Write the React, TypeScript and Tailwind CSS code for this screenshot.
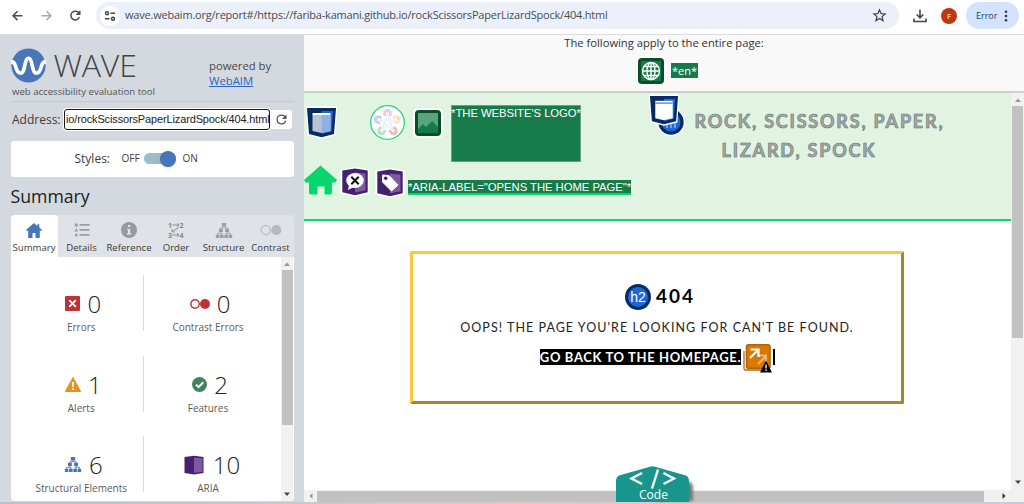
import type { ReactNode } from 'react';

const sans = "font-['Open_Sans','Noto_Sans',sans-serif]";
const arial = "font-['Liberation_Sans',Arial,sans-serif]";

function ReloadIcon({ className }: { className: string }) {
  return (
    <svg viewBox="0 0 24 24" className={className} fill="currentColor">
      <path d="M17.65 6.35A7.96 7.96 0 0 0 12 4a8 8 0 1 0 7.73 10h-2.08A6 6 0 1 1 12 6c1.66 0 3.14.69 4.22 1.78L13 11h7V4z" />
    </svg>
  );
}

function BrowserBar() {
  return (
    <header className="flex h-[35px] shrink-0 items-start border-b border-[#dcdddd] bg-white text-[#474747]">
      <svg viewBox="0 0 96 32" className="h-8 w-24 shrink-0" fill="none" strokeWidth="1.5">
        <path d="M22.500 15.700H13.300M17.500 11.300l-4.400 4.400 4.400 4.400" stroke="#4b4b4b" />
        <path d="M41.500 15.700h9.200M46.500 11.300l4.400 4.400-4.400 4.400" stroke="#a9a9a9" />
        <path d="M79.200 13.600a4.400 4.400 0 1 0 .2 3.500M79.800 10.800v3.400h-3.500" stroke="#4b4b4b" />
      </svg>
      <div className="mt-[2px] flex h-[27px] w-[803px] shrink-0 items-center rounded-full bg-[#ebf0fa]">
        <span className="ml-1 flex size-5 items-center justify-center rounded-full bg-white">
          <svg viewBox="0 0 12 12" className="size-3" fill="none" stroke="#444" strokeWidth="1.4">
            <circle cx="3" cy="3.200" r="1.500" />
            <path d="M6.500 3.200H11M1 8.800h4.500" />
            <circle cx="9" cy="8.800" r="1.500" />
          </svg>
        </span>
        <span className={`${sans} ml-[5px] text-[11px] tracking-[-.21px] text-[#4a4c50] whitespace-nowrap`}>
          wave.webaim.org/report#/https://fariba-kamani.github.io/rockScissorsPaperLizardSpock/404.html
        </span>
        <svg viewBox="0 0 24 24" className="mr-[12px] ml-auto size-[15px]" fill="none" stroke="#444" strokeWidth="2">
          <path d="m12 3 2.600 6 6.400.6-4.900 4.200 1.500 6.400-5.600-3.400-5.600 3.400 1.500-6.400L3 9.600 9.400 9z" />
        </svg>
      </div>
      <svg viewBox="0 0 14 14" className="mt-[9px] ml-[14px] size-[14px] shrink-0" fill="none" stroke="#474747" strokeWidth="1.600">
        <path d="M7 .5v8M3.700 5.500 7 8.800l3.300-3.300M1 9.500v3h12v-3" />
      </svg>
      <span className={`${sans} mt-2 ml-[14px] flex size-4 shrink-0 items-center justify-center rounded-full bg-[#c1360f] text-[8px] text-white`}>F</span>
      <span className="mt-[2px] ml-[9px] flex h-[27px] w-[53px] shrink-0 items-center rounded-full bg-[#d3e3fd] pl-[10px]">
        <span className={`${sans} w-[26px] text-[9px] text-[#24405f]`}>Error</span>
        <svg viewBox="0 0 4 12" className="ml-[2px] h-3 w-1" fill="#1f3b5b">
          <circle cx="2" cy="1.700" r="1.300" />
          <circle cx="2" cy="6" r="1.300" />
          <circle cx="2" cy="10.300" r="1.300" />
        </svg>
      </span>
    </header>
  );
}

function TreeIcon({ color, className }: { color: string; className: string }) {
  return (
    <svg viewBox="0 0 18 16" className={className} fill={color}>
      <path d="M6.700 0h4.600v3.600H6.700zM3.600 6.200h4.200v3.400H3.600zM10.200 6.200h4.200v3.400h-4.200zM.3 12.400h3.800V16H.3zM4.800 12.400h3.800V16H4.800zM9.400 12.400h3.800V16H9.400zM13.900 12.400h3.800V16h-3.800z" />
      <path d="M9 3v2H5.700v2M9 5h3.300v2M5.700 9.500V11H2.200v2M5.700 11h1v2M12.300 9.500V11h-1v2M12.300 11h3.500v2" fill="none" stroke={color} strokeWidth=".9" />
    </svg>
  );
}

const tabs: { label: string; width: string; icon: ReactNode }[] = [
  {
    label: 'Summary',
    width: 'w-[47px] bg-white rounded-t-[4px]',
    icon: (
      <svg viewBox="0 0 16 15" className="h-[15px] w-4" fill="#4577b8">
        <path d="M8 0 0 7l1 1.200 1.200-1V15h4.300v-5h3v5h4.300V7.200l1.200 1L16 7l-2.700-2.400V1.200h-2v1.700z" />
      </svg>
    ),
  },
  {
    label: 'Details',
    width: 'w-[48px]',
    icon: (
      <svg viewBox="0 0 16 14" className="h-[14px] w-4" fill="#9b9ea3">
        <path d="M.8.500h3v3h-3zM2.300 5 4.200 8.500H.4zM5.500 1h10v1.700h-10zM5.500 6h10v1.700h-10zM5.500 11h10v1.700h-10z" />
        <circle cx="2.300" cy="12" r="1.500" />
      </svg>
    ),
  },
  {
    label: 'Reference',
    width: 'w-[47px]',
    icon: (
      <svg viewBox="0 0 16 16" className="size-4">
        <circle cx="8" cy="8" r="8" fill="#96999e" />
        <path d="M7 3h2.200v2.100H7zM6.200 6.700h3V11h1v1.500H6V11h1V8.200h-.8z" fill="#e0e3e8" />
      </svg>
    ),
  },
  {
    label: 'Order',
    width: 'w-[47px]',
    icon: (
      <svg viewBox="0 0 18 18" className="size-[18px] overflow-visible" fill="none" stroke="#8d9095">
        <g className="font-['Open_Sans',sans-serif] text-[7px] font-bold" fill="#85888d" stroke="none">
          <text x="1" y="6.500">1</text>
          <text x="12.500" y="6.500">2</text>
          <text x="1" y="16.700">3</text>
          <text x="12.500" y="16.700">4</text>
        </g>
        <path d="M5.300 4H12M10 2.200 12 4l-2 1.800M5.300 14H12M10 12.200l2 1.800-2 1.800M11.500 6.500 5 10.700M5 8.200v2.700h2.700" />
      </svg>
    ),
  },
  { label: 'Structure', width: 'w-[48px]', icon: <TreeIcon color="#9b9ea3" className="h-[15px] w-[18px]" /> },
  {
    label: 'Contrast',
    width: 'w-[46px]',
    icon: (
      <svg viewBox="0 0 22 12" className="h-3 w-[22px]">
        <circle cx="5.700" cy="6" r="4.600" fill="none" stroke="#bbbdc1" strokeWidth="1.300" />
        <circle cx="16.300" cy="6" r="5.100" fill="#b6b8bc" />
      </svg>
    ),
  },
];

const stats: { label: string; count: string; icon: ReactNode }[] = [
  {
    label: 'Errors',
    count: '0',
    icon: (
      <svg viewBox="0 0 15 15" className="size-[15px]">
        <rect width="15" height="15" rx="1" fill="#bc3434" />
        <path d="m4.200 4.200 6.600 6.600m0-6.600-6.600 6.600" stroke="#fff" strokeWidth="1.800" />
      </svg>
    ),
  },
  {
    label: 'Contrast Errors',
    count: '0',
    icon: (
      <svg viewBox="0 0 20 10" className="h-[10px] w-5">
        <circle cx="5" cy="5" r="4.200" fill="none" stroke="#bc3434" strokeWidth="1.400" />
        <circle cx="15" cy="5" r="5" fill="#bc3434" />
      </svg>
    ),
  },
  {
    label: 'Alerts',
    count: '1',
    icon: (
      <svg viewBox="0 0 16 15" className="h-[15px] w-4">
        <path d="M8 .5 15.700 14.500H.3z" fill="#e8921c" stroke="#e8921c" strokeLinejoin="round" />
        <path d="M7 5h2l-.3 5H7.300zM7 11.200h2V13H7z" fill="#fff" />
      </svg>
    ),
  },
  {
    label: 'Features',
    count: '2',
    icon: (
      <svg viewBox="0 0 15 15" className="size-[15px]">
        <circle cx="7.500" cy="7.500" r="7.500" fill="#41845c" />
        <path d="m4 7.600 2.500 2.500L11.300 5.300" stroke="#fff" strokeWidth="2" fill="none" />
      </svg>
    ),
  },
  { label: 'Structural Elements', count: '6', icon: <TreeIcon color="#4577b8" className="h-[15px] w-[18px]" /> },
  {
    label: 'ARIA',
    count: '10',
    icon: (
      <svg viewBox="0 0 20 20" className="mr-[2px] ml-[4px] h-5 w-5">
        <path d="M.5 2 10 .8 19.500 2v16L10 19.500.5 18z" fill="#45206e" />
        <path d="M10 2.500 18.500 3.200v13.600L10 18z" fill="#7d5a9d" />
      </svg>
    ),
  },
];

function Arrow({ dir, color }: { dir: 'up' | 'down' | 'left' | 'right'; color: string }) {
  const d = { up: 'M0 5 3 1.500 6 5z', down: 'M0 1.500h6L3 5z', left: 'M4.500 0v6L1.500 3z', right: 'M1.500 0v6l3-3z' }[dir];
  return (
    <svg viewBox="0 0 6 6" className="size-[6px]" fill={color}>
      <path d={d} />
    </svg>
  );
}

function Sidebar() {
  return (
    <aside className={`${sans} flex w-[304px] shrink-0 flex-col bg-[#d4d8df] pr-[10px] pl-[10.500px] text-[#3c3c3c]`}>
      <div className="flex h-[66px] items-start">
        <div className="w-[198.500px]">
          <div className="flex h-[48px] items-center pt-[12px]">
            <svg viewBox="0 0 36 36" className="size-[35px]">
              <circle cx="18" cy="18" r="17.600" fill="#4777b9" />
              <path d="M0 14c2.500 0 3.600 1 4.500 4 1 4.500 2.300 8 5.700 8 4.400 0 3.400-15.500 7.800-15.500S21.400 26 25.800 26c3.400 0 4.700-3.500 5.700-8 .9-3 2-4 4.500-4" fill="none" stroke="#fff" strokeWidth="3.700" />
            </svg>
            <span className="ml-[8px] text-[32px] leading-none font-light tracking-[-.2px] text-[#444]">WAVE</span>
          </div>
          <p className="mt-px ml-[1.500px] text-[9.600px] leading-4 whitespace-nowrap text-[#555]">web accessibility evaluation tool</p>
        </div>
        <div className="pt-[23px] text-[11.300px] leading-[15px] whitespace-nowrap text-[#484848]">
          powered by
          <br />
          <a className="text-[#2468c4] underline">WebAIM</a>
        </div>
      </div>
      <div className="h-px bg-[#c5c8cc]" />
      <div className="mt-[7px] flex h-[21px] items-center">
        <span className="w-[53.500px] pl-[1.500px] text-[12px] whitespace-nowrap">Address:</span>
        <span className={`${arial} z-10 flex h-[21px] w-[206px] items-center rounded-[3px] border-[1.500px] border-[#1a1a1a] bg-white pl-px text-[11px] tracking-[-.14px] whitespace-nowrap text-[#222] ring-1 ring-white`}>
          io/rockScissorsPaperLizardSpock/404.html
        </span>
        <span className="flex h-[19px] w-[22px] items-center justify-center rounded-r-[3px] bg-white text-[#555]">
          <ReloadIcon className="size-[15px]" />
        </span>
      </div>
      <div className="mt-[10.500px] flex h-[36px] shrink-0 items-center rounded-[3px] bg-white pl-[64px]">
        <span className="w-[47px] text-[12px]">Styles:</span>
        <span className="w-[22px] text-[10px]">OFF</span>
        <span className="flex h-[11px] w-[32px] items-center justify-end rounded-full bg-[#9bbdcb]">
          <span className="size-4 shrink-0 rounded-full bg-[#4577b8] shadow-sm" />
        </span>
        <span className="ml-[7px] text-[10px]">ON</span>
      </div>
      <h2 className="mt-[7.500px] h-[31px] shrink-0 text-[17.700px] leading-[25px] text-[#1c1c1c]">Summary</h2>
      <nav className="flex h-[42px] shrink-0 rounded-t-[4px] bg-[#dfe2e7]">
        {tabs.map((t) => (
          <div key={t.label} className={`flex shrink-0 flex-col items-center ${t.width}`}>
            <span className="mt-[5px] flex h-[20px] items-center">{t.icon}</span>
            <span className="text-[9.600px] leading-4 whitespace-nowrap">{t.label}</span>
          </div>
        ))}
      </nav>
      <div className="flex h-[244px] shrink-0 overflow-hidden rounded-b-[4px] bg-white">
        <div className="grid w-[270.500px] grid-cols-[133.5px_137px] auto-rows-[80.5px] pt-[18px]">
          {stats.map((s, i) => (
            <div key={s.label} className={`flex h-[56px] flex-col items-center ${i % 2 ? 'pr-[9px]' : 'border-r border-[#d9dadb] pl-[9px]'}`}>
              <div className="mt-[13px] flex h-[31px] items-center gap-[7px] pl-[4px]">
                {s.icon}
                <span className="text-[24px] leading-[31px] font-light text-[#222]">{s.count}</span>
              </div>
              <span className="text-[10px] leading-4 whitespace-nowrap text-[#5a5a5a]">{s.label}</span>
            </div>
          ))}
        </div>
        <div className="flex w-[12px] flex-col items-center bg-[#f1f1f1]">
          <span className="flex h-[13px] items-center">
            <Arrow dir="up" color="#999" />
          </span>
          <span className="h-[155px] w-[11px] bg-[#c1c1c1]" />
          <span className="mt-auto mb-[4px]">
            <Arrow dir="down" color="#444" />
          </span>
        </div>
      </div>
    </aside>
  );
}

function RegionIcon({ className, solid = false }: { className: string; solid?: boolean }) {
  return (
    <svg viewBox="0 0 32 33" className={className}>
      <path d="M.3.300h31.400L29.800 29.500 16 32.800 2.200 29.500z" fill="#fff" />
      <path d="M1.500 2h29L28.500 28 16 31.200 3.500 28z" fill="#072b63" />
      <path d="M16 5h11.500l-1.500 20.500-10 2.500z" fill="#1e67d6" />
      <path d="M7 9h18v16l-9 2-9-2z" fill={solid ? '#fff' : '#b9c2d2'} />
      {!solid && <path d="M16 9h9v16l-9 2z" fill="#8cb1e6" />}
      <path d="M7 8h18" stroke="#fff" strokeWidth="2" />
      {solid && <path d="M7 9.500h18" stroke="#6f9bdc" strokeWidth="1.500" />}
    </svg>
  );
}

function AriaIcon({ children, className }: { children: ReactNode; className: string }) {
  return (
    <svg viewBox="0 0 30 30" className={className}>
      <path d="M.5 2.500 15 0l14.500 2.500v24L15 30 .5 26.500z" fill="#fff" />
      <path d="M2.300 3.500 15 1.600l12.700 1.900v21.800L15 28.300 2.300 25.300z" fill="#45206e" />
      <path d="M15 5.500 25.500 6.500v16.700L15 25.500z" fill="#7d5a9d" />
      {children}
    </svg>
  );
}

const petals = [
  { x: 17.5, y: 8, c: '#eec8f3', r: 0 },
  { x: 26.5, y: 14.5, c: '#fae5c0', r: 72 },
  { x: 23.5, y: 26, c: '#f0bcbc', r: 144 },
  { x: 11.5, y: 26, c: '#bfe2c4', r: 216 },
  { x: 8, y: 14.5, c: '#c7d3ec', r: 288 },
];

function PageHeader() {
  return (
    <div className="flex h-[128px] shrink-0 flex-col border-b-2 border-[#0bd66f] bg-[#e1f4e1]">
      <div className="flex h-[72px] items-start">
        <RegionIcon className="mt-[13px] ml-px h-[33px] w-[33px]" />
        <svg viewBox="0 0 35 35" className="mt-[12px] ml-[32px] size-[35px]">
          <circle cx="17.500" cy="17.500" r="16.800" fill="#fff" stroke="#22d67d" strokeWidth="1.300" />
          <path d="m17.500 9 5.500 16-13-10h15L12 25z" fill="none" stroke="#d9dde8" strokeWidth=".7" />
          {petals.map((p) => (
            <g key={p.c} transform={`translate(${p.x} ${p.y}) rotate(${p.r})`} fill="none" stroke={p.c}>
              <path d="M-2.800 3V0a2.800 2.800 0 0 1 5.600 0v3" strokeWidth="2.800" />
              <path d="M0-3v3" stroke="#e9a9b0" strokeWidth=".6" />
            </g>
          ))}
        </svg>
        <svg viewBox="0 0 30 30" className="mt-[15px] ml-[8px] size-[30px]">
          <rect width="30" height="30" rx="5" fill="#fff" />
          <rect x="2" y="2" width="26" height="26" rx="4" fill="#064f2b" />
          <rect x="5" y="5" width="20" height="20" fill="#5aa37f" />
          <path d="m5 21 5-5 3 3 6-6 6 6v6H5z" fill="#177b49" />
        </svg>
        <span className={`${arial} mt-[12px] ml-[8px] flex h-[57px] w-[130px] justify-center border border-[#6aa184] bg-[#177b49] text-[11.300px] leading-[15px] tracking-[-.05px] whitespace-nowrap text-white`}>
          *THE WEBSITE'S LOGO*
        </span>
        <div className="relative mt-px ml-[67px] h-[44px] w-[40px] shrink-0">
          <svg viewBox="0 0 28 28" className="absolute top-[14px] left-[9px] size-[28px]">
            <circle cx="14" cy="14" r="14" fill="#fff" />
            <circle cx="14" cy="14" r="12.700" fill="#072b63" />
            <circle cx="14" cy="14" r="9.500" fill="#1e67d6" />
            <path d="M10 12v8M14 14v6M18 14v6" stroke="#cfe0f8" />
          </svg>
          <RegionIcon solid className="absolute top-0 left-0 h-[32px] w-[32px]" />
        </div>
        <h1 className="mt-[14px] ml-[4px] w-[255px] text-center font-['Lato',sans-serif] text-[18px] leading-[29px] font-bold tracking-[1.800px] whitespace-nowrap text-[#a3aca6] [-webkit-text-stroke:0.6px_#666e73]">
          ROCK, SCISSORS, PAPER,
          <span className="block pr-[41px]">LIZARD, SPOCK</span>
        </h1>
      </div>
      <div className="flex items-start">
        <svg viewBox="0 0 33 29" className="h-[30px] w-[33px]" fill="#06d66d">
          <path d="M16.500 0 33 14.500 31.500 17H28v10a2 2 0 0 1-2 2h-5.500v-8h-7v8H7a2 2 0 0 1-2-2V17H1.500L0 14.500z" />
        </svg>
        <AriaIcon className="mt-[2px] ml-[3px] size-[30px]">
          <ellipse cx="15" cy="13.500" rx="8.800" ry="7.500" fill="#fff" />
          <path d="m9 18-1 5 6-3z" fill="#fff" />
          <path d="m11.300 9.800 7.400 7.400m0-7.400-7.400 7.400" stroke="#111" strokeWidth="2" />
        </AriaIcon>
        <AriaIcon className="mt-[3px] ml-[5px] size-[30px]">
          <path d="M7.500 7 14 7.500l9 9.500-6.500 6L7.500 14z" fill="#fff" stroke="#fff" strokeLinejoin="round" />
          <circle cx="10.700" cy="10.300" r="1.800" fill="#45206e" />
        </AriaIcon>
        <span className={`${arial} mt-[15px] ml-[3px] h-[15px] border-b-2 border-[#06d66d] bg-[#177b49] text-[11.300px] leading-[14px] tracking-[-.04px] whitespace-nowrap text-white`}>
          *ARIA-LABEL="OPENS THE HOME PAGE"*
        </span>
      </div>
    </div>
  );
}

function NotFoundBox() {
  return (
    <section className="mt-[30px] ml-[106px] flex h-[153px] w-[494px] flex-col items-center rounded-[2px] border-[3px] border-t-[#fdc63c] border-r-[#a98428] border-b-[#a98428] border-l-[#fdc63c] font-['Lato',sans-serif] text-[#222]">
      <div className="mt-[30px] flex h-[26px] items-center pl-[6px]">
        <svg viewBox="0 0 26 26" className="size-[26px]">
          <circle cx="13" cy="13" r="13" fill="#072b63" />
          <circle cx="13" cy="13" r="10" fill="#1e67d6" />
          <text x="13" y="18" textAnchor="middle" fill="#fff" className="font-['Liberation_Sans',sans-serif] text-[14px]">h2</text>
        </svg>
        <h2 className="-mt-[3px] ml-[5px] text-[19px] leading-none font-bold tracking-[1.900px] text-black">404</h2>
      </div>
      <p className="mt-[8px] text-[12.500px] leading-[20px] tracking-[1.040px] whitespace-nowrap">OOPS! THE PAGE YOU'RE LOOKING FOR CAN'T BE FOUND.</p>
      <p className="mt-[5px] flex h-[28px] items-center pl-px">
        <span className="h-[16px] bg-black text-[13px] leading-[16px] font-bold tracking-[.630px] whitespace-nowrap text-white">GO BACK TO THE HOMEPAGE.</span>
        <svg viewBox="0 0 31 30" className="mt-[3px] h-[30px] w-[31px]">
          <path d="M3 7v17a2 2 0 0 0 2 2h18" fill="none" stroke="#b36a13" strokeWidth="1.300" />
          <rect x="5.500" y=".8" width="23.500" height="23.500" rx="2" fill="#d97900" stroke="#b1640c" strokeWidth="1.600" />
          <path d="m17 20 7.500-7.500M17.500 11.500h7.500v7.500" stroke="#edb877" strokeWidth="2" fill="none" />
          <path d="m9 14 8-8M9.500 5.500H17.500v7.500" stroke="#fff" strokeWidth="2.200" fill="none" />
          <path d="M25 16.500 31 28.500H19z" fill="#050505" />
          <path d="M25 20.500v4M25 25.500v1.500" stroke="#fff" strokeWidth="1.300" />
        </svg>
        <span className="ml-px h-[16px] w-[2px] bg-black" />
      </p>
    </section>
  );
}

function Report() {
  return (
    <main className="relative flex w-[720px] flex-col bg-white">
      <div className={`${sans} flex h-[58px] shrink-0 flex-col items-center border-b-2 border-[#cbd0cb] bg-[#f9f9f9] text-[#333]`}>
        <p className="text-[11.200px] leading-[16px]">The following apply to the entire page:</p>
        <div className="mt-[6px] flex items-center pl-[7px]">
          <svg viewBox="0 0 28 28" className="size-[28px]" fill="none">
            <rect width="28" height="28" rx="5" fill="#fff" />
            <rect x="1" y="1" width="26" height="26" rx="4" fill="#064f2b" />
            <rect x="4" y="4" width="20" height="20" fill="#177b49" />
            <g stroke="#fff" strokeWidth="1.400">
              <circle cx="14" cy="14" r="8.500" />
              <ellipse cx="14" cy="14" rx="4" ry="8.500" />
              <path d="M14 5.500v17M5.500 14h17M7 9.500h14M7 18.500h14" />
            </g>
          </svg>
          <span className="-mt-[2px] ml-[6px] h-[15px] bg-[#177b49] px-[.5px] text-[11px] leading-[15px] text-white">*en*</span>
        </div>
      </div>
      <div className="flex h-[397px]">
        <div className="flex w-[707px] flex-col">
          <PageHeader />
          <NotFoundBox />
        </div>
        <div className="flex w-[13px] flex-col items-center bg-[#f1f1f1]">
          <span className="flex h-[13px] items-center">
            <Arrow dir="up" color="#999" />
          </span>
          <span className="h-[232px] w-[11px] bg-[#c1c1c1]" />
          <span className="mt-auto mb-[5px]">
            <Arrow dir="down" color="#444" />
          </span>
        </div>
      </div>
      <div className="flex h-[12px] items-center bg-[#f1f1f1]">
        <span className="flex w-[13px] justify-center">
          <Arrow dir="left" color="#999" />
        </span>
        <span className="h-[11px] w-[667px] bg-[#c1c1c1]" />
        <span className="ml-[17px]">
          <Arrow dir="right" color="#333" />
        </span>
      </div>
      <div className={`${sans} absolute top-[431px] left-[312px] h-[37px] w-[80px]`}>
        <svg viewBox="0 0 80 37" className="absolute inset-0 h-[37px] w-[80px]">
          <defs>
            <filter id="shade" x="-20%" width="140%">
              <feGaussianBlur stdDeviation="1.800" />
            </filter>
          </defs>
          <path d="M40 8 74 16q3 2 3 6v13H40z" fill="#777" filter="url(#shade)" />
          <path d="M0 36V15q0-4 3-5.500L33 1q3.500-1.300 7 0l30 8.500q3 1.500 3 5.500v21z" fill="#18968d" />
          <path d="M24 7 13.500 12.500 24 18M45.500 7l10.500 5.500L45.500 18M40 3.500l-6 19" transform="translate(2 0)" fill="none" stroke="#fff" strokeWidth="2.400" />
        </svg>
        <span className="relative mt-[21px] block w-[75px] text-center text-[12px] leading-[15px] text-white">Code</span>
      </div>
    </main>
  );
}

export default function App() {
  return (
    <div className="flex h-[504px] w-[1024px] flex-col overflow-hidden bg-white">
      <BrowserBar />
      <div className="flex h-[467px]">
        <Sidebar />
        <Report />
      </div>
      <div className="h-[2px] bg-gradient-to-r from-[#b6c0ce] via-[#dccac9] to-[#c3cedb]" />
    </div>
  );
}
